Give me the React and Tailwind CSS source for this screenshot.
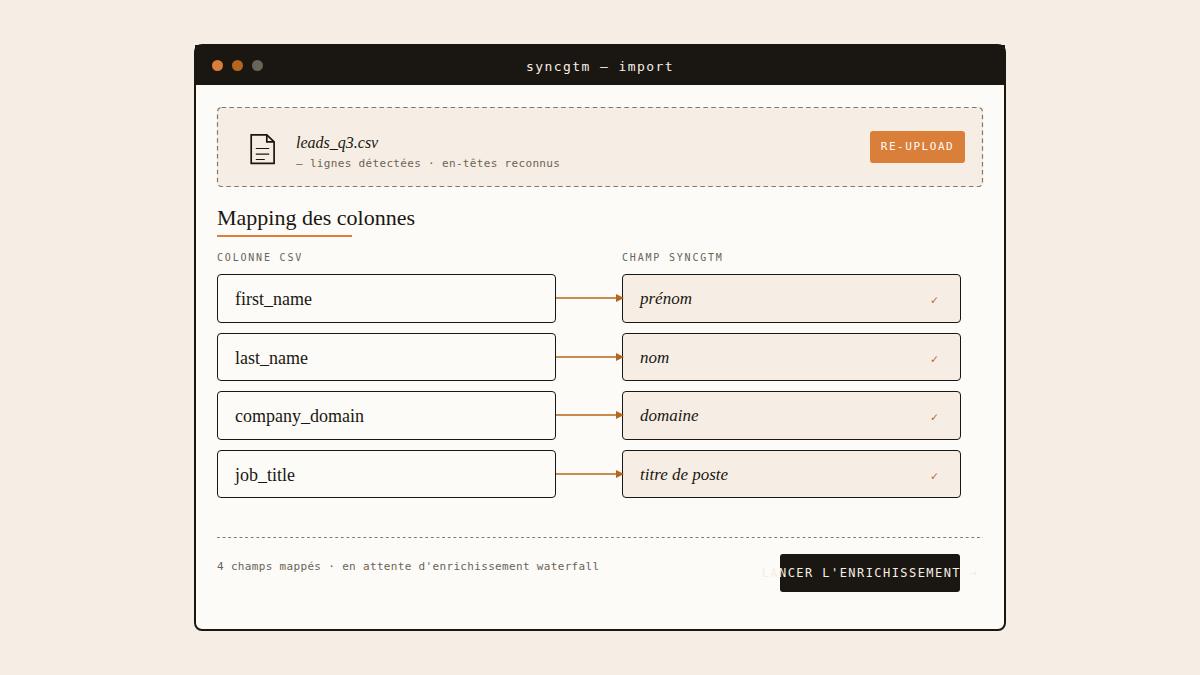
import React from "react";

const MAPPINGS = [
  { column: "first_name", field: "prénom" },
  { column: "last_name", field: "nom" },
  { column: "company_domain", field: "domaine" },
  { column: "job_title", field: "titre de poste" },
];

const MONO = "font-['DejaVu_Sans_Mono',monospace]";
const SERIF = "font-['Liberation_Serif',serif]";

const FileIcon = () => (
  <svg className="mt-0.5 h-8 w-7 shrink-0" viewBox="0 0 28 32" fill="none" stroke="#1a1712" aria-hidden="true">
    <path d="M2.2 1.9H17.8L25.1 8.9V30.4H2.2Z" strokeWidth="1.7" />
    <path d="M17.8 1.9V8.9H25.1" strokeWidth="1.7" />
    <path d="M6.8 15.5H20.2M6.8 21.1H20.2M6.8 26.5H15.8" strokeWidth="1.1" />
  </svg>
);

const Arrow = () => (
  <svg className="relative z-10 h-2 w-full overflow-visible" viewBox="0 0 66 8" aria-hidden="true">
    <path d="M0 4H62" stroke="#b5651d" strokeWidth="1.4" />
    <path d="M60 0L68 4L60 8Z" fill="#b5651d" />
  </svg>
);

const TitleBar = () => (
  <header className="relative -mx-px -mt-px flex h-10 items-center justify-center bg-[#1a1712]">
    <div className="absolute left-[17px] flex gap-[9px]" aria-hidden="true">
      <span className="size-[11px] rounded-full bg-[#d97f3a]" />
      <span className="size-[11px] rounded-full bg-[#b5651d]" />
      <span className="size-[11px] rounded-full bg-[#6b6358]" />
    </div>
    <h1 className={`${MONO} pt-1 text-[13px] leading-5 tracking-[0.11em] text-[#f6eee4]`}>syncgtm — import</h1>
  </header>
);

const UploadZone = () => (
  <section className="relative flex min-h-20 items-start rounded-[4px] bg-[#f6eee4] pt-6 pr-[18px] pl-8">
    <svg
      className="pointer-events-none absolute inset-0 h-full w-full overflow-visible opacity-85"
      aria-hidden="true"
    >
      <rect
        x="0.5"
        y="0.5"
        rx="4"
        className="h-[calc(100%-1px)] w-[calc(100%-1px)]"
        fill="none"
        stroke="#6b6358"
        strokeWidth="1.2"
        strokeDasharray="4.5 3.4"
      />
    </svg>
    <FileIcon />
    <div className="mt-0.5 ml-[19px] flex-1">
      <p className={`${SERIF} text-[16px] leading-5 text-[#1a1712] italic`}>leads_q3.csv</p>
      <p className={`${MONO} text-[11px] leading-[22px] tracking-[0.03em] text-[#6b6358]`}>
        — lignes détectées · en-têtes reconnus
      </p>
    </div>
    <button
      type="button"
      className={`${MONO} h-8 w-[95px] rounded-[3px] bg-[#d97f3a] text-[11px] tracking-[0.14em] whitespace-nowrap text-[#fcfbf7]`}
    >
      RE-UPLOAD
    </button>
  </section>
);

const MappingRow = ({ column, field }) => (
  <li className="grid flex-1 grid-cols-[1fr_66px_1fr] items-center">
    <div className="flex h-full items-center rounded-[4px] border border-[#1a1712] px-[17px] pt-0.5">
      <span className={`${SERIF} text-[18px] leading-6`}>{column}</span>
    </div>
    <Arrow />
    <div className="flex h-full items-center justify-between rounded-[4px] border border-[#1a1712] bg-[#f6eee4] pt-0.5 pr-[22px] pl-[17px]">
      <span className={`${SERIF} text-[17px] leading-6 italic`}>{field}</span>
      <span className={`${MONO} pt-0.5 text-[12px] leading-4 text-[#b5651d]`}>✓</span>
    </div>
  </li>
);

const ColumnMapping = () => (
  <section className="mt-4">
    <h2 className={`${SERIF} text-[22px] leading-[30px]`}>Mapping des colonnes</h2>
    <div className="mt-0.5 h-0.5 w-[135px] bg-[#d97f3a]" />
    <div className="pr-[22px]">
      <div
        className={`${MONO} mt-3 grid grid-cols-[1fr_66px_1fr] text-[10px] leading-[18px] tracking-[0.18em] text-[#6b6358]`}
      >
        <span>COLONNE CSV</span>
        <span className="col-start-3">CHAMP SYNCGTM</span>
      </div>
      <ul className="mt-[7px] flex h-56 flex-col gap-2.5">
        {MAPPINGS.map((mapping) => (
          <MappingRow key={mapping.column} {...mapping} />
        ))}
      </ul>
    </div>
  </section>
);

const Footer = () => (
  <footer className="mt-[39px]">
    <svg className="block h-px w-full opacity-85" aria-hidden="true">
      <line x1="0" y1="0.5" x2="100%" y2="0.5" stroke="#6b6358" strokeDasharray="2.8 2.83" />
    </svg>
    <div className="flex items-start justify-between pt-4 pr-[23px]">
      <p className={`${MONO} mt-0.5 text-[11px] leading-[22px] tracking-[0.03em] text-[#6b6358]`}>
        4 champs mappés · en attente d'enrichissement waterfall
      </p>
      {/* The label is wider than the button and spills out on both sides */}
      <button
        type="button"
        className={`${MONO} flex h-[38px] w-[180px] shrink-0 items-center justify-center rounded-[3px] bg-[#1a1712] text-[12px] tracking-[0.12em] whitespace-nowrap text-[#f6eee4]`}
      >
        LANCER L'ENRICHISSEMENT →
      </button>
    </div>
  </footer>
);

const App = () => (
  <main className="flex min-h-screen items-center justify-center bg-[#f6eee4] text-[#1a1712]">
    <div className="w-full max-w-[812px] rounded-[8px] border-2 border-[#1a1712] bg-[#fcfbf7]">
      <TitleBar />
      <div className="px-[21px] pt-[22px] pb-[37px]">
        <UploadZone />
        <ColumnMapping />
        <Footer />
      </div>
    </div>
  </main>
);

export default App;
